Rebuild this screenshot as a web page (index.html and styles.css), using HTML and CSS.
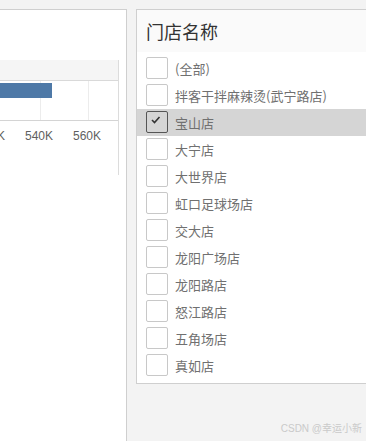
FILE: index.html
```html
<!DOCTYPE html>
<html>
<head>
	<title>门店销售</title>
	<link rel="stylesheet" href="styles.css">
</head>
<body>
	<div class="page">
		<div class="sheet">
			<div class="chart">
				<div class="chart-head"></div>
				<svg class="plot" width="118" height="40">
					<line x1="40.5" y1="0" x2="40.5" y2="39" stroke="#ececec"/>
					<line x1="88.5" y1="0" x2="88.5" y2="39" stroke="#ececec"/>
					<rect x="0" y="2" width="52" height="15" fill="#4e79a7"/>
					<line x1="0" y1="39.5" x2="118" y2="39.5" stroke="#d4d4d4"/>
				</svg>
				<div class="axis">
					<span>520K</span>
					<span>540K</span>
					<span>560K</span>
				</div>
			</div>
		</div>
		<div class="filter">
			<div class="filter-title">门店名称</div>
			<ul class="filter-list">
				<li class="item"><span class="box"></span><span class="label">(全部)</span></li>
				<li class="item"><span class="box"></span><span class="label">拌客干拌麻辣烫(武宁路店)</span></li>
				<li class="item selected">
					<span class="box">
						<svg width="10" height="8" viewBox="0 0 10 8"><polyline points="1,4 3.5,6.5 8.5,1" fill="none" stroke="#333" stroke-width="1.6"/></svg>
					</span>
					<span class="label">宝山店</span>
				</li>
				<li class="item"><span class="box"></span><span class="label">大宁店</span></li>
				<li class="item"><span class="box"></span><span class="label">大世界店</span></li>
				<li class="item"><span class="box"></span><span class="label">虹口足球场店</span></li>
				<li class="item"><span class="box"></span><span class="label">交大店</span></li>
				<li class="item"><span class="box"></span><span class="label">龙阳广场店</span></li>
				<li class="item"><span class="box"></span><span class="label">龙阳路店</span></li>
				<li class="item"><span class="box"></span><span class="label">怒江路店</span></li>
				<li class="item"><span class="box"></span><span class="label">五角场店</span></li>
				<li class="item"><span class="box"></span><span class="label">真如店</span></li>
			</ul>
		</div>
	</div>
	<div class="credit">CSDN @幸运小新</div>
</body>
</html>
```

FILE: styles.css
```css
		body {
			margin: 0;
			height: 441px;
			overflow: hidden;
			background-color: #f3f3f3;
			font-family: "Liberation Sans", "Noto Sans CJK SC", sans-serif;
			position: relative;
		}
		.page {
			display: flex;
			gap: 9px;
			padding-top: 9px;
		}
		.sheet {
			box-sizing: border-box;
			width: 127px;
			height: 432px;
			flex-shrink: 0;
			background: white;
			border-top: 1px solid #cfcfcf;
			border-right: 1px solid #cfcfcf;
			padding-top: 50px;
		}
		.chart {
			width: 118px;
			height: 115px;
			border-right: 1px solid #dcdcdc;
			overflow: hidden;
		}
		.chart-head {
			box-sizing: border-box;
			height: 21px;
			background: #f5f5f5;
			border-bottom: 1px solid #d9d9d9;
		}
		.plot {
			display: block;
		}
		.axis {
			display: flex;
			margin-left: -33px;
			padding-top: 6px;
			font-size: 12px;
			line-height: 18px;
			color: #5f5f5f;
		}
		.axis span {
			width: 48px;
			flex-shrink: 0;
			text-align: center;
		}
		.filter {
			box-sizing: border-box;
			width: 250px;
			height: 375px;
			flex-shrink: 0;
			background: white;
			border: 1px solid #cfcfcf;
		}
		.filter-title {
			height: 42px;
			line-height: 42px;
			padding-left: 9px;
			background: #fafafa;
			font-family: "Noto Sans CJK SC", sans-serif;
			font-size: 18px;
			color: #333;
		}
		.filter-list {
			list-style: none;
			margin: 0;
			padding: 3px 0 0 0;
		}
		.item {
			display: flex;
			align-items: flex-start;
			height: 27px;
			padding-left: 9px;
		}
		.item.selected {
			background: #d5d5d5;
		}
		.box {
			box-sizing: border-box;
			width: 22px;
			height: 22px;
			margin-top: 2px;
			border: 1px solid #c8c8c8;
			border-radius: 2px;
			display: flex;
			align-items: flex-start;
			padding: 4px 0 0 4px;
		}
		.selected .box {
			border-color: #555;
		}
		.label {
			margin-left: 7px;
			font-family: "Noto Sans CJK SC", sans-serif;
			font-size: 13px;
			line-height: 27px;
			color: #707070;
		}
		.credit {
			position: absolute;
			right: 4px;
			bottom: 6px;
			font-size: 10px;
			color: #cacaca;
		}
```
